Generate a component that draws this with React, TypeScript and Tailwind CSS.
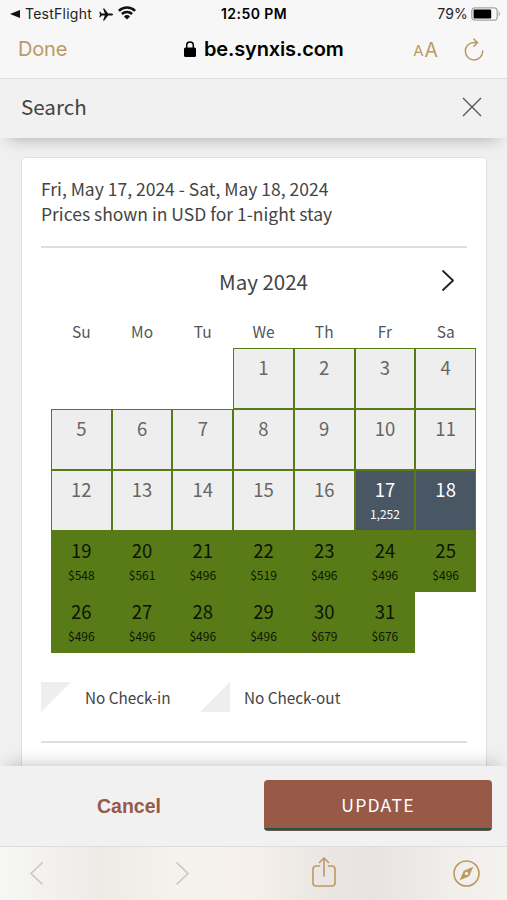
import React from 'react';
import clsx from 'clsx';

type Day = { day: number; price?: string; selected?: boolean };

const weekdays = ['Su', 'Mo', 'Tu', 'We', 'Th', 'Fr', 'Sa'];

const prices: Record<number, string> = {
  17: '1,252',
  19: '$548',
  20: '$561',
  21: '$496',
  22: '$519',
  23: '$496',
  24: '$496',
  25: '$496',
  26: '$496',
  27: '$496',
  28: '$496',
  29: '$496',
  30: '$679',
  31: '$676',
};

const days: Day[] = Array.from({ length: 31 }, (_, i) => ({
  day: i + 1,
  price: prices[i + 1],
  selected: i + 1 === 17 || i + 1 === 18,
}));

const StatusBar: React.FC = () => (
  <div className="flex h-7 items-center justify-between pl-[10px] pr-[6px] text-[14px] leading-7 text-[#222]">
    <div className="flex w-[180px] items-center">
      <svg className="h-2 w-[10px]" viewBox="0 0 10 8" fill="#111">
        <path d="M0 4 10 0v8z" />
      </svg>
      <span className="ml-[5px] w-[68px] whitespace-nowrap tracking-[0.25px]">TestFlight</span>
      <svg className="ml-[6px] h-[13px] w-[14px]" viewBox="0 0 14 13" fill="#111">
        <path d="M14 6.5c0-.6-.8-1-1.7-1H9.1L5.3.4H4l1.9 5.1H2.7L1.2 3.8H.3L1 6.5.3 9.2h.9l1.5-1.7h3.2L4 12.6h1.3l3.8-5.1h3.2c.9 0 1.7-.4 1.7-1z" />
      </svg>
      <svg className="-mt-[2px] ml-[5px] h-[14px] w-[18px]" viewBox="0 0 18 14" fill="none" stroke="#111" strokeWidth="2.5">
        <path d="M.9 4.9a11.6 11.6 0 0 1 16.2 0M3.9 8a7.3 7.3 0 0 1 10.2 0" />
        <path d="M9 13.6 5.9 10.4a4.5 4.5 0 0 1 6.2 0z" fill="#111" stroke="none" />
      </svg>
    </div>
    <div className="w-[69px] whitespace-nowrap font-semibold tracking-[0.45px] text-black">12:50 PM</div>
    <div className="flex w-[180px] items-center justify-end">
      <span className="tracking-[0.2px]">79%</span>
      <svg className="-mt-px ml-[3px] h-[14px] w-[30px]" viewBox="0 0 30 14" fill="none">
        <rect x=".8" y=".8" width="25.4" height="12.4" rx="3.3" stroke="#a5a5a5" strokeWidth="1.3" />
        <rect x="2.6" y="2.6" width="17.6" height="8.8" rx="1.2" fill="#000" />
        <path d="M27.7 4.8c1.6.5 1.6 3.9 0 4.4z" fill="#a5a5a5" />
      </svg>
    </div>
  </div>
);

const AddressBar: React.FC = () => (
  <div className="flex h-[51px] items-start border-b border-[#dedede] pl-[18px] pr-[23px] text-[20px] leading-[42px] text-[#bb9a62]">
    <div className="w-[166px] tracking-[-0.2px]">Done</div>
    <div className="flex items-center font-semibold text-black">
      <svg className="mr-2 h-4 w-3" viewBox="0 0 12 16">
        <rect y="6.5" width="12" height="9.5" rx="1.6" fill="#000" />
        <path d="M2.7 7V4.4a3.3 3.3 0 0 1 6.6 0V7" fill="none" stroke="#000" strokeWidth="1.5" />
      </svg>
      <span className="w-[140px] whitespace-nowrap tracking-[-0.15px]">be.synxis.com</span>
    </div>
    <div className="ml-auto flex items-center justify-end">
      <span className="mt-[2px] text-[15px]">A</span>
      <span className="ml-px text-[19.5px]">A</span>
      <svg className="-mt-[2px] ml-[26px] h-[23px] w-[20px]" viewBox="0 0 20 23" fill="none" stroke="#bb9a62" strokeWidth="1.5" strokeLinecap="round" strokeLinejoin="round">
        <path d="M18.7 13A8.7 8.7 0 1 1 10 4.5h3.2M9.8 1l3.7 3.6-3.7 3.6" />
      </svg>
    </div>
  </div>
);

const DayCell: React.FC<Day> = ({ day, price, selected }) => (
  <div
    className={clsx(
      'flex flex-col items-center border border-[#587b18] pt-[5px]',
      day === 1 && 'col-start-4',
      selected && 'bg-[#495664] text-white',
      !selected && day < 17 && 'bg-[#eeeeee] text-[#666]',
      day > 18 && 'bg-[#587b18] text-[#0b1502]'
    )}
  >
    <span className="text-[18.5px] leading-[26px]">{day}</span>
    {price && <span className="mt-[3px] text-[12px] leading-[18px]">{price}</span>}
  </div>
);

const Calendar: React.FC = () => (
  <div className="-mr-[9px] ml-[10px]">
    <div className="relative flex h-[68px] items-center justify-center pb-[2px] text-[20.5px] text-[#444]">
      May 2024
      <svg className="absolute right-[22px] top-[22px] h-[21px] w-3" viewBox="0 0 12 21" fill="none" stroke="#222" strokeWidth="1.8" strokeLinecap="round" strokeLinejoin="round">
        <path d="m1 1 10 9.5L1 20" />
      </svg>
    </div>
    <div className="grid h-8 grid-cols-7 text-center text-[15.5px] leading-[30px] text-[#555]">
      {weekdays.map((name) => (
        <div key={name}>{name}</div>
      ))}
    </div>
    <div className="grid auto-rows-[61px] grid-cols-7">
      {days.map((d) => (
        <DayCell key={d.day} {...d} />
      ))}
    </div>
  </div>
);

const Legend: React.FC = () => (
  <div className="mt-[29px] flex h-[30px] items-center text-[15.3px] text-[#444]">
    <svg className="h-[30px] w-[30px]" viewBox="0 0 30 30" fill="#eee">
      <path d="M0 0h30L0 30z" />
    </svg>
    <span className="ml-[14px] w-[115px] whitespace-nowrap">No Check-in</span>
    <svg className="h-[30px] w-[30px]" viewBox="0 0 30 30" fill="#eee">
      <path d="M30 0v30H0z" />
    </svg>
    <span className="ml-[14px] whitespace-nowrap">No Check-out</span>
  </div>
);

const Toolbar: React.FC = () => (
  <div className="flex h-[54px] items-start border-t border-[#dddddb] bg-[linear-gradient(90deg,#f7f7f5_0%,#eeebe7_20%,#f5f2ee_34%,#f5f0eb_50%,#eae6e3_64%,#e8e3e1_74%,#f1eeeb_90%,#f4f2ef_100%)] pl-[30px] pt-[12px]">
    <svg className="mt-[3px] h-[23px] w-[13px]" viewBox="0 0 13 23" fill="none" stroke="#cbc8c4" strokeWidth="1.7" strokeLinecap="round" strokeLinejoin="round">
      <path d="m12 1-11 10.5L12 22" />
    </svg>
    <svg className="ml-[133px] mt-[3px] h-[23px] w-[13px]" viewBox="0 0 13 23" fill="none" stroke="#cbc8c4" strokeWidth="1.7" strokeLinecap="round" strokeLinejoin="round">
      <path d="m1 1 11 10.5L1 22" />
    </svg>
    <svg className="-mt-[2px] ml-[123px] h-[30px] w-6" viewBox="0 0 24 30" fill="none" stroke="#bb9a62" strokeWidth="1.6" strokeLinecap="round" strokeLinejoin="round">
      <path d="M7.5 9H4a3 3 0 0 0-3 3v14a3 3 0 0 0 3 3h16a3 3 0 0 0 3-3V12a3 3 0 0 0-3-3h-3.5M12 19V1.2M7.5 5.5 12 1l4.5 4.5" />
    </svg>
    <svg className="ml-[117px] mt-px h-[27px] w-[27px]" viewBox="0 0 27 27" fill="none" stroke="#bb9a62" strokeWidth="1.6">
      <circle cx="13.5" cy="13.5" r="12.5" />
      <path d="M20.3 6.7 16.2 16.2 6.7 20.3 10.8 10.8z" fill="#bb9a62" stroke="none" />
      <circle cx="13.5" cy="13.5" r="1.7" fill="#f1eeeb" stroke="none" />
    </svg>
  </div>
);

const App: React.FC = () => {
  return (
    <div className="flex h-[900px] w-[507px] flex-col overflow-hidden bg-[#f7f7f7] font-['Inter',sans-serif]">
      <StatusBar />
      <AddressBar />

      {/* Search panel header */}
      <header className="z-10 flex h-[59px] shrink-0 items-center justify-between bg-[#f1f1f1] pl-[21px] pr-[25px] font-['Noto_Sans_CJK_SC',sans-serif] text-[20.6px] text-[#444] shadow-[0_10px_16px_-9px_rgba(0,0,0,0.28)]">
        <h1 className="pb-[5px] leading-[54px]">Search</h1>
        <svg className="-mt-1 h-5 w-5" viewBox="0 0 20 20" fill="none" stroke="#555" strokeWidth="1.3">
          <path d="m1 1 18 18M19 1 1 19" />
        </svg>
      </header>

      {/* Availability */}
      <main className="h-[628px] shrink-0 overflow-hidden bg-[#f0f0f0] pl-[21px] pr-5 pt-[19px] font-['Noto_Sans_CJK_SC',sans-serif]">
        <div className="h-[660px] rounded border border-[#dfdfdf] bg-white px-[19px] pt-[19px]">
          <div className="h-[71px] border-b-2 border-[#dedede] text-[17.5px] leading-[24.5px] text-[#444]">
            <p>Fri, May 17, 2024 - Sat, May 18, 2024</p>
            <p>Prices shown in USD for 1-night stay</p>
          </div>
          <Calendar />
          <Legend />
          <hr className="mt-[29px] border-t-2 border-[#dedede]" />
        </div>
      </main>

      <footer className="z-10 flex h-20 shrink-0 items-start bg-[#f1f1f1] pt-[14px] shadow-[0_-10px_16px_-9px_rgba(0,0,0,0.24)]">
        <button className="ml-[64px] h-[52px] w-[130px] pt-px text-[19.5px] font-bold text-[#985947] font-['Liberation_Sans',sans-serif]">
          Cancel
        </button>
        <button className="ml-[70px] h-[51px] w-[228px] rounded-[4px] bg-[linear-gradient(to_top,#6b584a_1px,#245246_1px,#245246_3px,#985947_3px)] pb-px font-['Noto_Sans_CJK_SC',sans-serif] text-[17.6px] tracking-[1.2px] text-white">
          UPDATE
        </button>
      </footer>
      <Toolbar />
    </div>
  );
};

export default App;
